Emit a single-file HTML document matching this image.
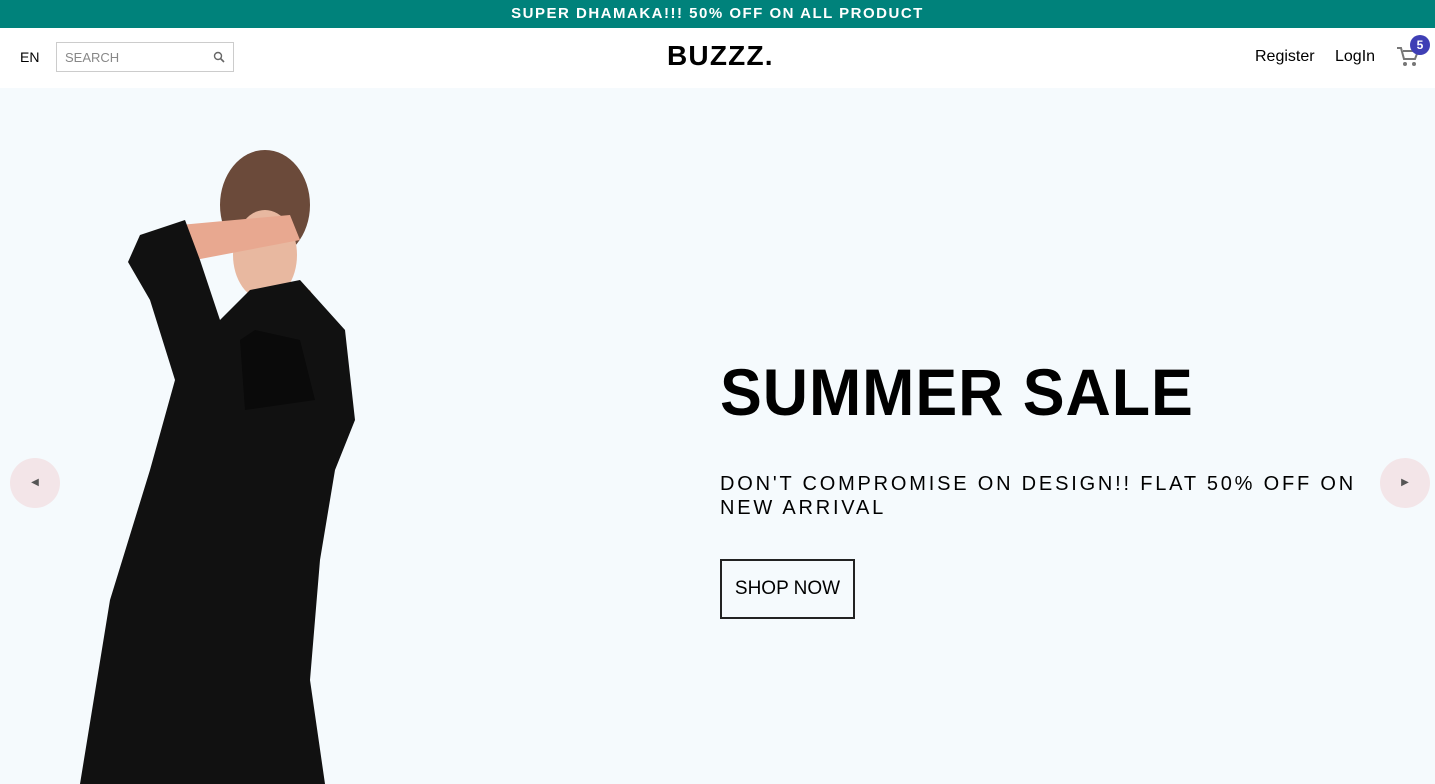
<!DOCTYPE html>
<html><head><style>
*{margin:0;padding:0;box-sizing:border-box}
body{width:1435px;height:784px;overflow:hidden;font-family:"Liberation Sans",sans-serif;background:#f5fafd;position:relative}
.top{height:28px;background:#00827b;color:#fff;font-weight:bold;font-size:15px;letter-spacing:1.5px;text-align:center;line-height:28px}
.nav{height:60px;background:#fff;position:relative}
.en{position:absolute;left:20px;top:21px;font-size:14px}
.search{position:absolute;left:56px;top:14px;width:178px;height:30px;border:1px solid #ccc;font-size:13px;color:#888;padding:7px 0 0 8px}
.logo{position:absolute;left:667px;top:12px;font-size:28px;font-weight:bold;letter-spacing:1.2px}
.r{position:absolute;top:20px;font-size:16px}
.badge{position:absolute;left:1410px;top:7px;width:20px;height:20px;border-radius:50%;background:#3f3fb5;color:#fff;font-size:12px;font-weight:bold;text-align:center;line-height:20px}
h1{position:absolute;left:720px;top:354px;font-size:66px;font-weight:bold;letter-spacing:1px;transform:scaleX(0.95);transform-origin:left;white-space:nowrap}
.sub{position:absolute;left:720px;top:472px;font-size:20px;letter-spacing:2.8px;line-height:24px;width:650px}
.btn{position:absolute;left:720px;top:559px;width:135px;height:60px;border:2px solid #222;font-size:19px;text-align:center;line-height:56px}
.arr{position:absolute;top:458px;width:50px;height:50px;border-radius:50%;background:#f3e5e8;font-size:10px;color:#555;text-align:center;line-height:50px}
</style></head><body>
<div class="top">SUPER DHAMAKA!!! 50% OFF ON ALL PRODUCT</div>
<div class="nav">
<div class="en">EN</div>
<div class="search">SEARCH<svg style="position:absolute;right:8px;top:8px" width="12" height="12" viewBox="0 0 12 12"><circle cx="5" cy="5" r="3.5" fill="none" stroke="#666" stroke-width="1.4"/><path d="M7.5 7.5L11 11" stroke="#666" stroke-width="1.6"/></svg></div>
<div class="logo">BUZZZ.</div>
<div class="r" style="left:1255px">Register</div>
<div class="r" style="left:1335px">LogIn</div>
<svg style="position:absolute;left:1396px;top:18px" width="24" height="22" viewBox="0 0 24 22"><path d="M1 2h4l3 11h11l3-8H7" fill="none" stroke="#777" stroke-width="2"/><circle cx="9" cy="18" r="2" fill="#777"/><circle cx="18" cy="18" r="2" fill="#777"/></svg>
<div class="badge">5</div>
</div>
<svg style="position:absolute;left:0;top:88px" width="420" height="696" viewBox="0 88 420 696">
<ellipse cx="265" cy="205" rx="45" ry="55" fill="#6b4a3a"/>
<ellipse cx="265" cy="255" rx="32" ry="45" fill="#e8b8a0"/>
<path d="M245 300 L310 290 L330 330 L320 400 L250 400 L240 340Z" fill="#e8b8a0"/>
<path d="M180 225 L290 215 L300 240 L195 260 Z" fill="#e8a890"/>
<path d="M140 235 L185 220 L200 260 L220 320 L250 290 L300 280 L345 330 L355 420 L335 470 L320 560 L310 680 L325 784 L80 784 L110 600 L150 470 L175 380 L150 300 L128 262Z" fill="#111"/>
<path d="M240 340 L255 330 L300 340 L315 400 L245 410Z" fill="#0a0a0a"/>
</svg>
<div class="arr" style="left:10px">◀</div>
<div class="arr" style="left:1380px">▶</div>
<h1>SUMMER SALE</h1>
<div class="sub">DON'T COMPROMISE ON DESIGN!! FLAT 50% OFF ON NEW ARRIVAL</div>
<div class="btn">SHOP NOW</div>
</body></html>
